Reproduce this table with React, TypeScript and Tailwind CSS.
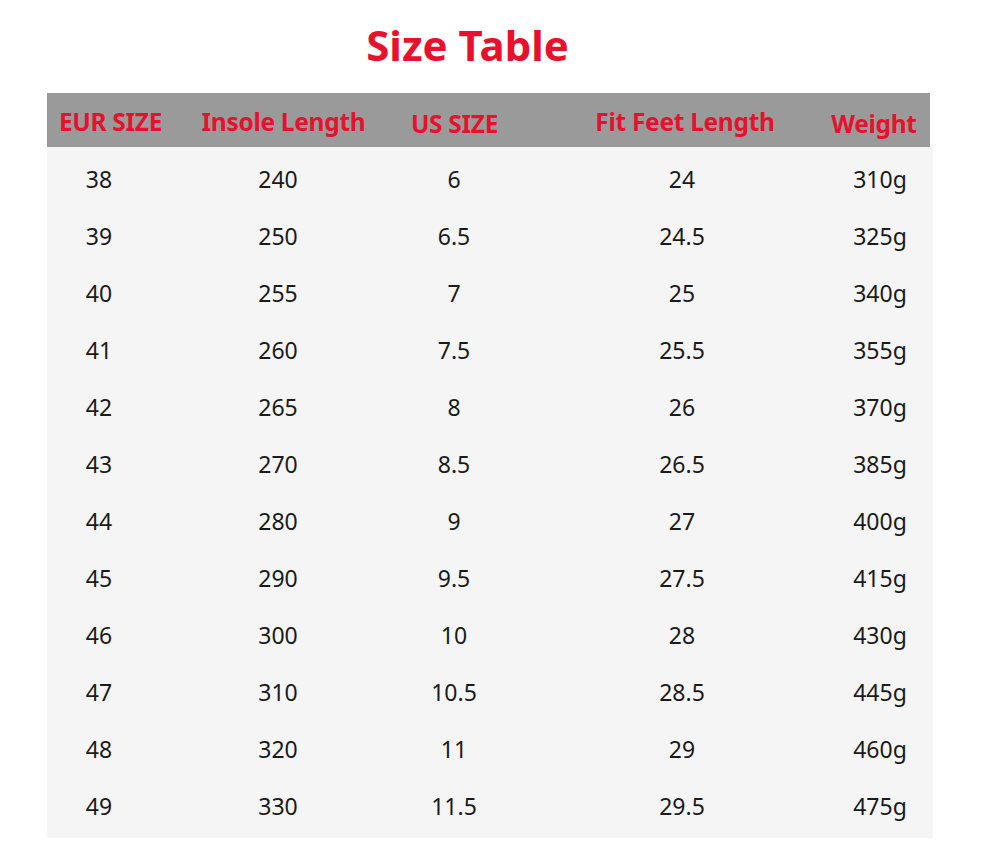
import React from "react";

const rows = [
  ["38", "240", "6", "24", "310g"],
  ["39", "250", "6.5", "24.5", "325g"],
  ["40", "255", "7", "25", "340g"],
  ["41", "260", "7.5", "25.5", "355g"],
  ["42", "265", "8", "26", "370g"],
  ["43", "270", "8.5", "26.5", "385g"],
  ["44", "280", "9", "27", "400g"],
  ["45", "290", "9.5", "27.5", "415g"],
  ["46", "300", "10", "28", "430g"],
  ["47", "310", "10.5", "28.5", "445g"],
  ["48", "320", "11", "29", "460g"],
  ["49", "330", "11.5", "29.5", "475g"],
];

// column widths chosen so each cell's centre lands on the picture's column centre
const dataCols = ["w-[104px]", "w-[254px]", "w-[98px]", "w-[358px]", "w-[38px]"];

const headers = [
  { label: "EUR SIZE", w: "w-[127px]", pt: "pt-[4px]" },
  { label: "Insole Length", w: "w-[219px]", pt: "pt-[5px]" },
  { label: "US SIZE", w: "w-[123px]", pt: "pt-[8px]" },
  { label: "Fit Feet Length", w: "w-[338px]", pt: "pt-[5px]" },
  { label: "Weight", w: "w-[40px]", pt: "pt-[8px]" },
];

export default function App() {
  return (
    <div
      className="w-[987px] h-[843px] bg-white overflow-hidden"
      style={{ fontFamily: '"Noto Sans", "Open Sans", sans-serif' }}
    >
      <div className="h-[93px] flex items-center justify-center">
        <h1 className="text-[42px] font-bold text-[#e8112d] leading-none ml-[-52px] mb-[3px]">
          Size Table
        </h1>
      </div>

      <div className="ml-[47px] w-[886px]">
        <div className="h-[54px] w-[883px] bg-[#9a9a9a] flex items-center">
          {headers.map((h) => (
            <div key={h.label} className={`${h.w} ${h.pt} flex justify-center shrink-0`}>
              <span className="whitespace-nowrap text-[24.5px] font-bold text-[#e8112d] tracking-[-0.3px]">
                {h.label}
              </span>
            </div>
          ))}
        </div>

        <div className="bg-[#f5f5f5] pt-[4px] pb-[3px]">
          {rows.map((r) => (
            <div key={r[0]} className="h-[57px] flex items-center">
              {r.map((v, i) => (
                <div key={i} className={`${dataCols[i]} flex justify-center shrink-0`}>
                  <span className="whitespace-nowrap text-[23px] text-[#1a1a1a]">{v}</span>
                </div>
              ))}
            </div>
          ))}
        </div>
      </div>
    </div>
  );
}
